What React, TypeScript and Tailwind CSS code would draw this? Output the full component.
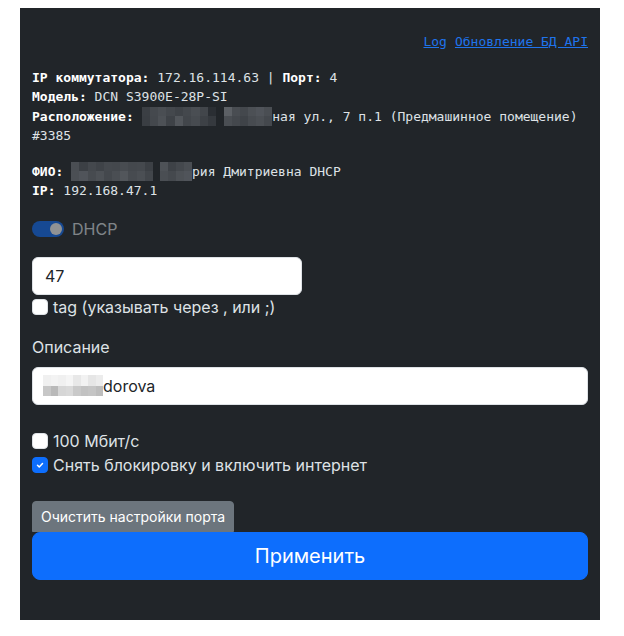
import { useState } from 'react';

const mono = { fontFamily: '"DejaVu Sans Mono", monospace' };

// pixelated (redacted) patch: two rows of colored cells
const Pixels = ({ top, bottom, cell, h }: { top: string[]; bottom: string[]; cell: number; h: number }) => (
  <span className="inline-flex flex-col align-top">
    <span className="flex">
      {top.map((c, i) => (
        <span key={i} style={{ background: c, width: cell, height: h }} />
      ))}
    </span>
    <span className="flex">
      {bottom.map((c, i) => (
        <span key={i} style={{ background: c, width: cell, height: h }} />
      ))}
    </span>
  </span>
);

const Check = ({ checked, onChange, label }: { checked: boolean; onChange: () => void; label: string }) => (
  <label className="flex items-center gap-[5px] h-6 cursor-pointer">
    <span
      onClick={onChange}
      className={`w-4 h-4 rounded-[4px] flex items-center justify-center shrink-0 ${
        checked ? 'bg-[#0d6efd] border border-[#0d6efd]' : 'bg-white border border-[#dee2e6]'
      }`}
    >
      {checked && (
        <svg width="10" height="10" viewBox="0 0 20 20" fill="none">
          <path d="M5 10.5l3.5 3.5L15 7" stroke="#fff" strokeWidth="3" strokeLinecap="round" strokeLinejoin="round" />
        </svg>
      )}
    </span>
    <span>{label}</span>
  </label>
);

export default function App() {
  const [tag, setTag] = useState(false);
  const [speed, setSpeed] = useState(false);
  const [unblock, setUnblock] = useState(true);

  return (
    <div className="min-h-screen bg-white pt-2 px-5">
      <div
        className="w-[580px] bg-[#212529] text-[#dee2e6] px-3 pt-6 pb-10"
        style={{ fontFamily: 'Inter, "Noto Sans", sans-serif' }}
      >
        {/* top links */}
        <div className="flex justify-end gap-[8px] text-[13px] leading-[19.5px]" style={mono}>
          <a href="#" className="text-[#1f74ec] underline">Log</a>
          <a href="#" className="text-[#1f74ec] underline">Обновление БД API</a>
        </div>

        {/* switch info */}
        <div className="mt-4 text-[13px] leading-[19.5px]" style={mono}>
          <p className="mb-4">
            <b className="text-white">IP коммутатора:</b> 172.16.114.63 | <b className="text-white">Порт:</b> 4
            <br />
            <b className="text-white">Модель:</b> DCN S3900E-28P-SI
            <br />
            <b className="text-white">Расположение:</b>{' '}
            <Pixels
              cell={8.3}
              h={9.5}
              top={['#3b3f44', '#45494e', '#4a4e53', '#44484d', '#3f4348', '#44484d', '#4a4e53', '#42464b', '#2a2e33']}
              bottom={['#3a3e43', '#44484d', '#4d5156', '#3e4247', '#52565b', '#42464b', '#474b50', '#3d4146', '#35393e']}
            />
            <span className="inline-block w-[8px]" />
            <Pixels
              cell={8}
              h={9.5}
              top={['#5c6065', '#494d52', '#44484d', '#4c5055', '#50545a', '#4a4e53']}
              bottom={['#4a4e53', '#44484d', '#3f4348', '#474b50', '#4b4f54', '#44484d']}
            />
            ная ул., 7 п.1 (Предмашинное помещение) #3385
          </p>
          <p className="mb-4">
            <b className="text-white">ФИО:</b>{' '}
            <Pixels
              cell={8.2}
              h={9.5}
              top={['#4a4e53', '#3c4045', '#44484d', '#3f4348', '#45494e', '#44484d', '#484c51', '#44484d', '#45494e', '#3c4045']}
              bottom={['#4b4f54', '#50545a', '#474b50', '#4d5156', '#44484d', '#4a4e53', '#52565b', '#474b50', '#4b4f54', '#42464b']}
            />
            <span className="inline-block w-[7px]" />
            <Pixels
              cell={8}
              h={9.5}
              top={['#4e5257', '#3e4247', '#44484d', '#4a4e53']}
              bottom={['#4a4e53', '#45494e', '#4d5156', '#50545a']}
            />
            рия Дмитриевна DHCP
            <br />
            <b className="text-white">IP:</b> 192.168.47.1
          </p>
        </div>

        {/* DHCP switch (disabled) */}
        <div className="flex items-center h-6 opacity-50">
          <span className="w-8 h-4 rounded-full bg-[#0d6efd] flex items-center justify-end pr-[2px]">
            <span className="w-3 h-3 rounded-full bg-white" />
          </span>
          <span className="ml-2 text-base">DHCP</span>
        </div>

        {/* VLAN */}
        <div className="mt-4">
          <div className="w-[270px] h-[38px] bg-white border border-[#dee2e6] rounded-[6px] px-3 flex items-center text-base text-[#212529]">
            47
          </div>
          <Check checked={tag} onChange={() => setTag(!tag)} label="tag (указывать через , или ;)" />
        </div>

        {/* description */}
        <div className="mt-4 text-base leading-6">Описание</div>
        <div className="mt-2 h-[38px] bg-white border border-[#dee2e6] rounded-[6px] pl-[10px] flex items-center text-base text-[#212529]">
          <Pixels
            cell={7.5}
            h={10.5}
            top={['#f0f0f0', '#f3f3f3', '#f0f0f0', '#f5f5f5', '#e8e8e8', '#f2f2f2', '#e6e6e6', '#ececec']}
            bottom={['#c7c7c7', '#b9b9b9', '#d6d6d6', '#d9d9d9', '#c9c9c9', '#c2c2c2', '#c5c5c5', '#bdbdbd']}
          />
          <span>dorova</span>
        </div>

        {/* options */}
        <div className="mt-6 text-base">
          <Check checked={speed} onChange={() => setSpeed(!speed)} label="100 Мбит/с" />
          <Check checked={unblock} onChange={() => setUnblock(!unblock)} label="Снять блокировку и включить интернет" />
        </div>

        {/* actions */}
        <div className="mt-6">
          <button className="bg-[#6c757d] text-white text-sm leading-[21px] px-2 py-1 border border-[#6c757d] rounded-t-[4px]">
            Очистить настройки порта
          </button>
          <button className="w-full h-12 bg-[#0d6efd] text-white text-xl rounded-[8px] border border-[#0d6efd]">
            Применить
          </button>
        </div>
      </div>
    </div>
  );
}
